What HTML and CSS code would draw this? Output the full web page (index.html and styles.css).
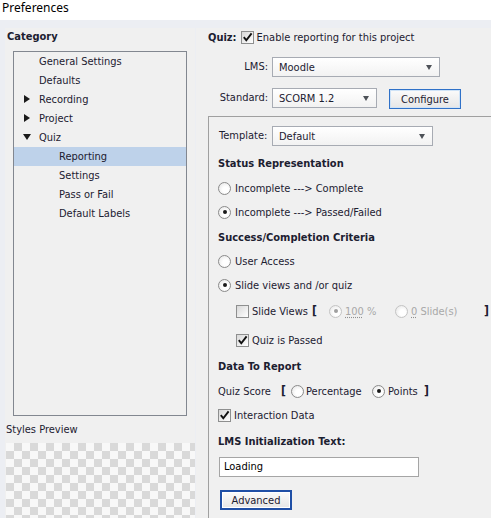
FILE: index.html
```html
<!DOCTYPE html>
<html>
<head>
<meta charset="utf-8">
<link rel="stylesheet" href="styles.css">
</head>
<body>
<div class="window">
  <div class="titlebar">Preferences</div>
  <div class="main">
    <aside class="left">
      <div class="cat-title">Category</div>
      <ul class="tree">
        <li class="node lvl1">General Settings</li>
        <li class="node lvl1">Defaults</li>
        <li class="node lvl1"><span class="tw closed"></span>Recording</li>
        <li class="node lvl1"><span class="tw closed"></span>Project</li>
        <li class="node lvl1"><span class="tw open"></span>Quiz</li>
        <li class="node lvl2 selected">Reporting</li>
        <li class="node lvl2">Settings</li>
        <li class="node lvl2">Pass or Fail</li>
        <li class="node lvl2">Default Labels</li>
      </ul>
      <div class="preview-label">Styles Preview</div>
      <div class="preview"></div>
    </aside>

    <section class="right">
      <div class="quiz-row">
        <span class="bold">Quiz:</span>
        <span class="cb"><svg viewBox="0 0 11 11"><path d="M1.8 5.2 L4.3 8.3 L9.6 1.4" /></svg></span>
        <span>Enable reporting for this project</span>
      </div>

      <div class="field-row lms">
        <span class="field-label">LMS:</span>
        <div class="sel w-lms"><span>Moodle</span><span class="arr"></span></div>
      </div>

      <div class="field-row std">
        <span class="field-label">Standard:</span>
        <div class="sel w-std"><span>SCORM 1.2</span><span class="arr"></span></div>
        <div class="btn configure">Configure</div>
      </div>

      <div class="box">
        <div class="field-row tpl">
          <span class="field-label tpl-label">Template:</span>
          <div class="sel w-tpl"><span>Default</span><span class="arr"></span></div>
        </div>

        <div class="row heading mt5">Status Representation</div>
        <div class="row mt1"><span class="rb"></span><span>Incomplete ---&gt; Complete</span></div>
        <div class="row"><span class="rb on"><i class="dot"></i></span><span>Incomplete ---&gt; Passed/Failed</span></div>

        <div class="row heading mt1">Success/Completion Criteria</div>
        <div class="row"><span class="rb"></span><span>User Access</span></div>
        <div class="row"><span class="rb on"><i class="dot"></i></span><span>Slide views and /or quiz</span></div>

        <div class="row sub mt2">
          <span class="grp g-sv"><span class="cb"></span><span>Slide Views</span><span class="brk">[</span></span>
          <span class="grp g-pct dis"><span class="rb on"><i class="dot"></i></span><span><u>100</u> %</span></span>
          <span class="grp g-sld dis"><span class="rb"></span><span><u>0</u> Slide(s)</span></span>
          <span class="brk">]</span>
        </div>
        <div class="row sub mt5">
          <span class="grp"><span class="cb"><svg viewBox="0 0 11 11"><path d="M1.8 5.2 L4.3 8.3 L9.6 1.4" /></svg></span><span>Quiz is Passed</span></span>
        </div>

        <div class="row heading mt2">Data To Report</div>
        <div class="row tight mt1">
          <span class="grp g-qs">Quiz Score</span>
          <span class="grp g-lb brk">[</span>
          <span class="grp g-per"><span class="rb"></span><span>Percentage</span></span>
          <span class="grp g-pts"><span class="rb on"><i class="dot"></i></span><span>Points</span></span>
          <span class="brk">]</span>
        </div>
        <div class="row">
          <span class="grp"><span class="cb"><svg viewBox="0 0 11 11"><path d="M1.8 5.2 L4.3 8.3 L9.6 1.4" /></svg></span><span>Interaction Data</span></span>
        </div>

        <div class="row heading mt2">LMS Initialization Text:</div>
        <div class="input">Loading</div>
        <div class="btn advanced">Advanced</div>
      </div>
    </section>
  </div>
</div>
</body>
</html>
```

FILE: styles.css
```css
* { box-sizing: border-box; }

html, body {
  margin: 0;
  padding: 0;
  width: 491px;
  height: 518px;
  overflow: hidden;
}

body {
  font-family: "DejaVu Sans Condensed", "DejaVu Sans", sans-serif;
  font-stretch: condensed;
  font-size: 11px;
  color: #1c2030;
  background: #eceef3;
}

.window {
  width: 491px;
  height: 518px;
  display: flex;
  flex-direction: column;
}

.titlebar {
  height: 20px;
  flex: none;
  background: #ffffff;
  font-family: "Noto Sans", "DejaVu Sans", sans-serif;
  font-stretch: normal;
  font-size: 12px;
  line-height: 15px;
  padding-left: 2px;
  color: #000;
}

.main {
  flex: 1;
  display: flex;
  padding-top: 8px;
  min-height: 0;
  overflow: hidden;
}

/* ---------- left column ---------- */
.left {
  width: 190px;
  margin-left: 5px;
  background: #f0f0f0;
  display: flex;
  flex-direction: column;
  overflow: hidden;
}

.left > * { flex: none; }

.cat-title {
  font-weight: bold;
  line-height: 16px;
  margin-top: 1px;
  padding-left: 2px;
}

.tree {
  list-style: none;
  margin: 6px 0 0 8px;
  padding: 0;
  width: 174px;
  height: 365px;
  border: 1px solid #828790;
  background: #f0f0f0;
}

.node {
  height: 19px;
  display: flex;
  align-items: center;
  padding-bottom: 1px;
  white-space: nowrap;
}

.lvl1 { padding-left: 25px; }
.lvl2 { padding-left: 45px; }

.selected { background: #bed2ea; }

.tw {
  width: 20px;
  margin-left: -20px;
  display: flex;
  align-items: center;
  padding-left: 5px;
}

.tw::before {
  content: "";
  display: block;
  width: 0;
  height: 0;
}

.tw.closed::before {
  border-left: 6px solid #1a1a1a;
  border-top: 4px solid transparent;
  border-bottom: 4px solid transparent;
}

.tw.open::before {
  border-top: 6px solid #1a1a1a;
  border-left: 4px solid transparent;
  border-right: 4px solid transparent;
  margin-left: -1px;
}

.preview-label {
  line-height: 16px;
  margin-top: 6px;
  padding-left: 1px;
}

.preview {
  margin-top: 5px;
  margin-left: 1px;
  width: 189px;
  height: 80px;
  background-color: #f8f8f8;
  background-image: conic-gradient(#d9d9d9 25%, transparent 0 50%, #d9d9d9 0 75%, transparent 0);
  background-size: 16px 16px;
}

/* ---------- right column ---------- */
.right {
  flex: 1;
  margin-left: 1px;
  background: #f0f0f0;
  padding-left: 12px;
  display: flex;
  flex-direction: column;
  min-width: 0;
  overflow: hidden;
}

.right > * { flex: none; }

.bold { font-weight: bold; }

.quiz-row {
  height: 18px;
  display: flex;
  align-items: center;
  gap: 4px;
  white-space: nowrap;
}

.quiz-row .cb { margin-right: -1px; }

.field-row {
  display: flex;
  align-items: flex-start;
  gap: 4px;
}

.field-label {
  width: 60px;
  text-align: right;
  line-height: 20px;
  white-space: nowrap;
}

.tpl-label {
  width: 50px;
  text-align: left;
  padding-left: 1px;
}

.lms { margin-top: 11px; }
.std { margin-top: 11px; height: 21px; }
.tpl { height: 20px; }

.sel {
  height: 20px;
  border: 1px solid #a7abb3;
  background: linear-gradient(#ffffff, #f2f2f2);
  display: flex;
  align-items: center;
  justify-content: space-between;
  padding-left: 6px;
  padding-right: 7px;
  white-space: nowrap;
}

.w-lms { width: 168px; }
.w-std { width: 105px; }
.w-tpl { width: 161px; }

.arr {
  width: 0;
  height: 0;
  border-top: 5px solid #4e5258;
  border-left: 3.5px solid transparent;
  border-right: 3.5px solid transparent;
  margin-top: 1px;
}

.btn {
  height: 20px;
  display: flex;
  align-items: center;
  justify-content: center;
  background: linear-gradient(#fbfbfb, #e6e6e6);
  white-space: nowrap;
}

.configure {
  width: 72px;
  margin-left: 8px;
  margin-top: 1px;
  border: 1px solid #2f71c8;
  box-shadow: inset 0 0 0 1px #cfe3f7;
}

.advanced {
  width: 72px;
  margin-top: 13px;
  margin-left: 2px;
  border: 2px solid #1f4fa6;
  box-shadow: inset 0 0 0 1px #ffffff;
}

.box {
  margin-top: 7px;
  width: 300px;
  flex: 1 0 auto;
  border-top: 1px solid #a0a0a0;
  border-left: 1px solid #a0a0a0;
  padding: 9px 0 0 9px;
  display: flex;
  flex-direction: column;
}

.box > * { flex: none; }

.row {
  height: 24px;
  display: flex;
  align-items: center;
  gap: 4px;
  white-space: nowrap;
}

.row.tight { gap: 0; }

.heading { font-weight: bold; }

.mt1 { margin-top: 1px; }
.mt2 { margin-top: 2px; }
.mt5 { margin-top: 5px; }

.sub { padding-left: 18px; gap: 0; }

.grp {
  display: flex;
  align-items: center;
  gap: 3px;
}

.g-sv { width: 93px; }
.g-pct { width: 66px; }
.g-sld { width: 89px; }

.g-qs { width: 63px; }
.g-lb { width: 10px; }
.g-per { width: 81px; gap: 2px; }
.g-pts { width: 52px; }

.brk {
  font-weight: bold;
  font-size: 12px;
}

.g-sv .brk { margin-left: 1px; }

.dis { color: #a8a8a8; }
.dis u {
  text-decoration: underline dotted #909090;
  text-underline-offset: 2px;
}

/* checkbox */
.cb {
  width: 13px;
  height: 13px;
  flex: none;
  border: 1px solid #8e8f8f;
  background: linear-gradient(135deg, #d8d8d8, #ffffff);
  display: flex;
}

.cb svg {
  width: 11px;
  height: 11px;
}

.cb path {
  fill: none;
  stroke: #111111;
  stroke-width: 1.9;
}

/* radio */
.rb {
  width: 13px;
  height: 13px;
  flex: none;
  border-radius: 50%;
  border: 1px solid #8b8b8b;
  background: radial-gradient(circle at 60% 60%, #ffffff 30%, #e2e2e2);
  display: flex;
  align-items: center;
  justify-content: center;
}

.rb .dot {
  width: 4px;
  height: 4px;
  border-radius: 50%;
  background: #1a1a1a;
}

.dis .rb { border-color: #c4c4c4; }
.dis .rb .dot { background: #a0a0a0; }

.input {
  margin-top: 4px;
  margin-left: 1px;
  width: 200px;
  height: 20px;
  border: 1px solid #a5a5a5;
  background: #ffffff;
  padding-left: 4px;
  line-height: 18px;
  color: #000;
}
```
